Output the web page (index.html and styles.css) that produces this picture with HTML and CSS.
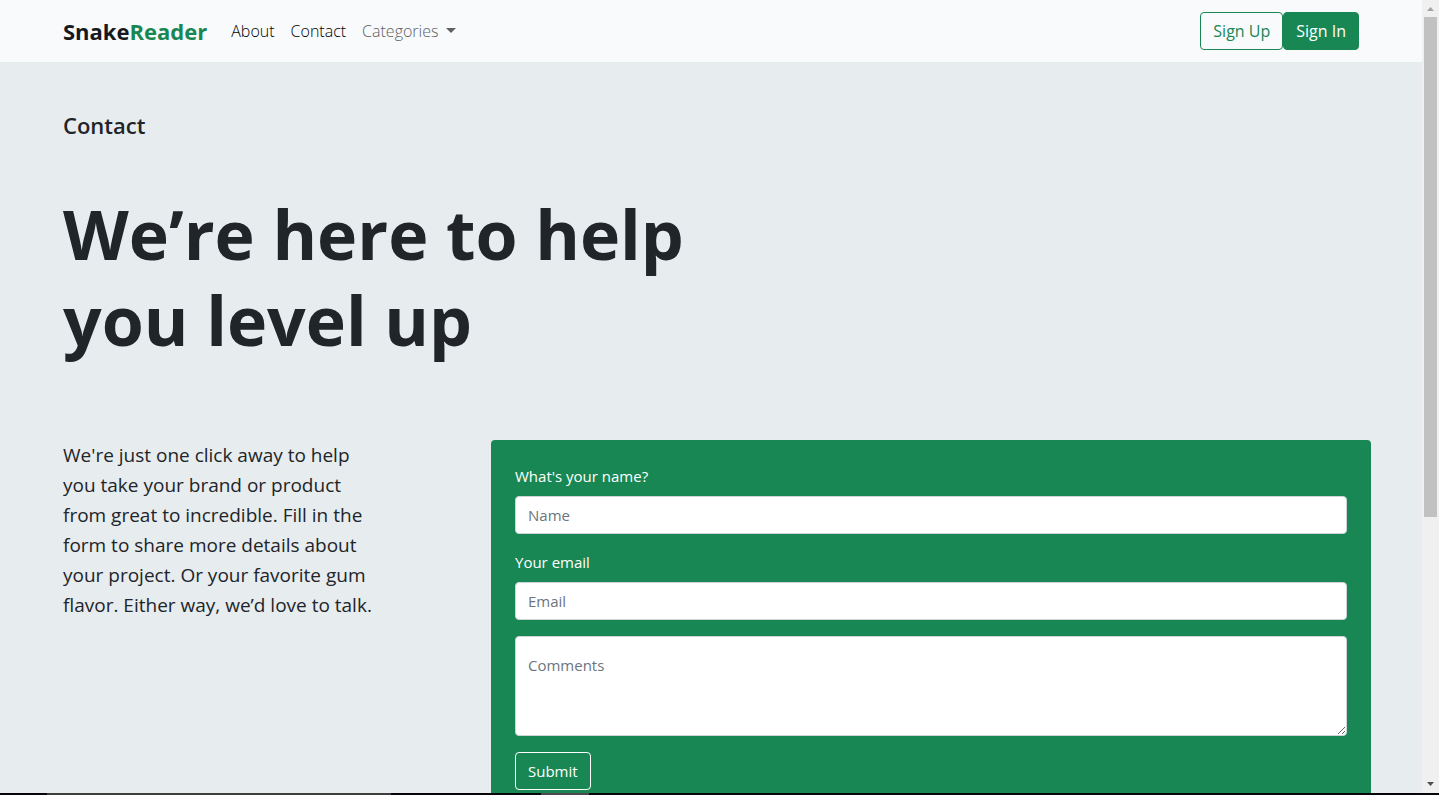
FILE: index.html
```html
<!DOCTYPE html>
<html lang="en">
<head>
<meta charset="utf-8">
<meta name="viewport" content="width=device-width, initial-scale=1">
<title>SnakeReader - Contact</title>
<link rel="stylesheet" href="styles.css">
</head>
<body>
<div class="window">
  <div class="page">
    <header class="navbar">
      <div class="container navbar-inner">
        <a class="brand" href="#">Snake<span class="brand-accent">Reader</span></a>
        <nav class="nav">
          <a class="nav-link" href="#">About</a>
          <a class="nav-link" href="#">Contact</a>
          <a class="nav-link muted" href="#">Categories<span class="caret"></span></a>
        </nav>
        <div class="actions">
          <button class="btn btn-outline" type="button">Sign Up</button>
          <button class="btn btn-solid" type="button">Sign In</button>
        </div>
      </div>
    </header>
    <main class="container main">
      <h2 class="eyebrow">Contact</h2>
      <h1 class="title">We’re here to help<br>you level up</h1>
      <div class="row">
        <p class="lead">We're just one click away to help you take your brand or product from great to incredible. Fill in the form to share more details about your project. Or your favorite gum flavor. Either way, we’d love to talk.</p>
        <form class="form">
          <label class="label" for="name">What's your name?</label>
          <input class="control" id="name" type="text" placeholder="Name">
          <label class="label" for="email">Your email</label>
          <input class="control" id="email" type="email" placeholder="Email">
          <textarea class="control comments" id="comments" aria-label="Comments" placeholder="Comments"></textarea>
          <button class="btn btn-light" type="button">Submit</button>
        </form>
      </div>
    </main>
  </div>
  <div class="scrollbar">
    <svg class="arrow" viewBox="0 0 17 17"><path d="M5 11h7L8.500 7z" fill="#a3a3a3"/></svg>
    <div class="thumb"></div>
    <svg class="arrow arrow-down" viewBox="0 0 17 17"><path d="M5 6h7L8.500 10z" fill="#505050"/></svg>
  </div>
</div>
<div class="taskbar"><span class="task task-search"></span><span class="task task-app"></span></div>
</body>
</html>
```
FILE: styles.css
```css
* { box-sizing: border-box; }
body {
  margin: 0;
  height: 100vh;
  display: flex;
  flex-direction: column;
  overflow: hidden;
  background: #e7ecef;
  color: #212529;
  font: 400 15px/24px "Open Sans", "Noto Sans", sans-serif;
}
.window { flex: 1; min-height: 0; display: flex; }
.page { flex: 1; min-width: 0; overflow: hidden; }
.container { max-width: 1320px; margin: 0 auto; padding: 0 12px; }

.navbar { background: #f8fafc; padding: 12px 0; }
.navbar-inner { display: flex; align-items: center; }
.brand { color: #16191c; font-size: 22px; line-height: 38px; font-weight: 700; text-decoration: none; margin-right: 16px; }
.brand-accent { color: #198754; }
.nav { display: flex; }
.nav-link { color: #000; font-size: 16px; font-weight: 300; text-decoration: none; padding: 0 8px; }
.muted { color: #606164; }
.caret { display: inline-block; margin-left: 8px; vertical-align: 4px; border: 5px solid transparent; border-top-color: currentColor; border-bottom: 0; }
.actions { display: flex; margin-left: auto; }

.btn { font: inherit; height: 38px; padding: 0 12px; border: 1px solid #198754; border-radius: 4px; }
.actions .btn { font-size: 16px; }
.btn-outline { background: transparent; color: #198754; }
.btn-solid { background: #198754; color: #fff; }
.btn-light { background: transparent; border-color: #fff; color: #fff; }

.main { padding-top: 49px; }
.eyebrow { margin: 0 0 51px; font-size: 22px; line-height: 29px; font-weight: 600; }
.title { margin: 0 0 77px; font-size: 68px; line-height: 86px; font-weight: 700; }
.row { display: grid; grid-template-columns: 1fr 2fr; margin: 0 -12px; align-items: start; }
.lead { margin: 0; padding: 0 112px 0 12px; font-size: 19px; line-height: 30px; }
.form { background: #198754; border-radius: 4px; padding: 24px; color: #fff; }
.label { display: block; margin-bottom: 8px; }
.control { display: block; width: 100%; height: 38px; margin: 0 0 16px; padding: 0 12px; border: 1px solid #ced4da; border-radius: 4px; background: #fff; color: #212529; font: inherit; }
.control::placeholder { color: #6c757d; opacity: 1; }
.comments { height: 100px; padding-top: 16px; resize: vertical; }

.scrollbar { width: 17px; background: #f0f0f0; display: flex; flex-direction: column; }
.arrow { width: 17px; height: 17px; flex: none; }
.thumb { width: 13px; height: 63%; margin: 0 2px; background: #c1c1c1; }
.arrow-down { margin-top: auto; }
.taskbar { height: 2px; background: #08060a; display: flex; padding-left: 47px; gap: 150px; }
.task { background: #3d3d3d; }
.task-search { width: 344px; }
.task-app { width: 48px; background: #4d484d; }
```
